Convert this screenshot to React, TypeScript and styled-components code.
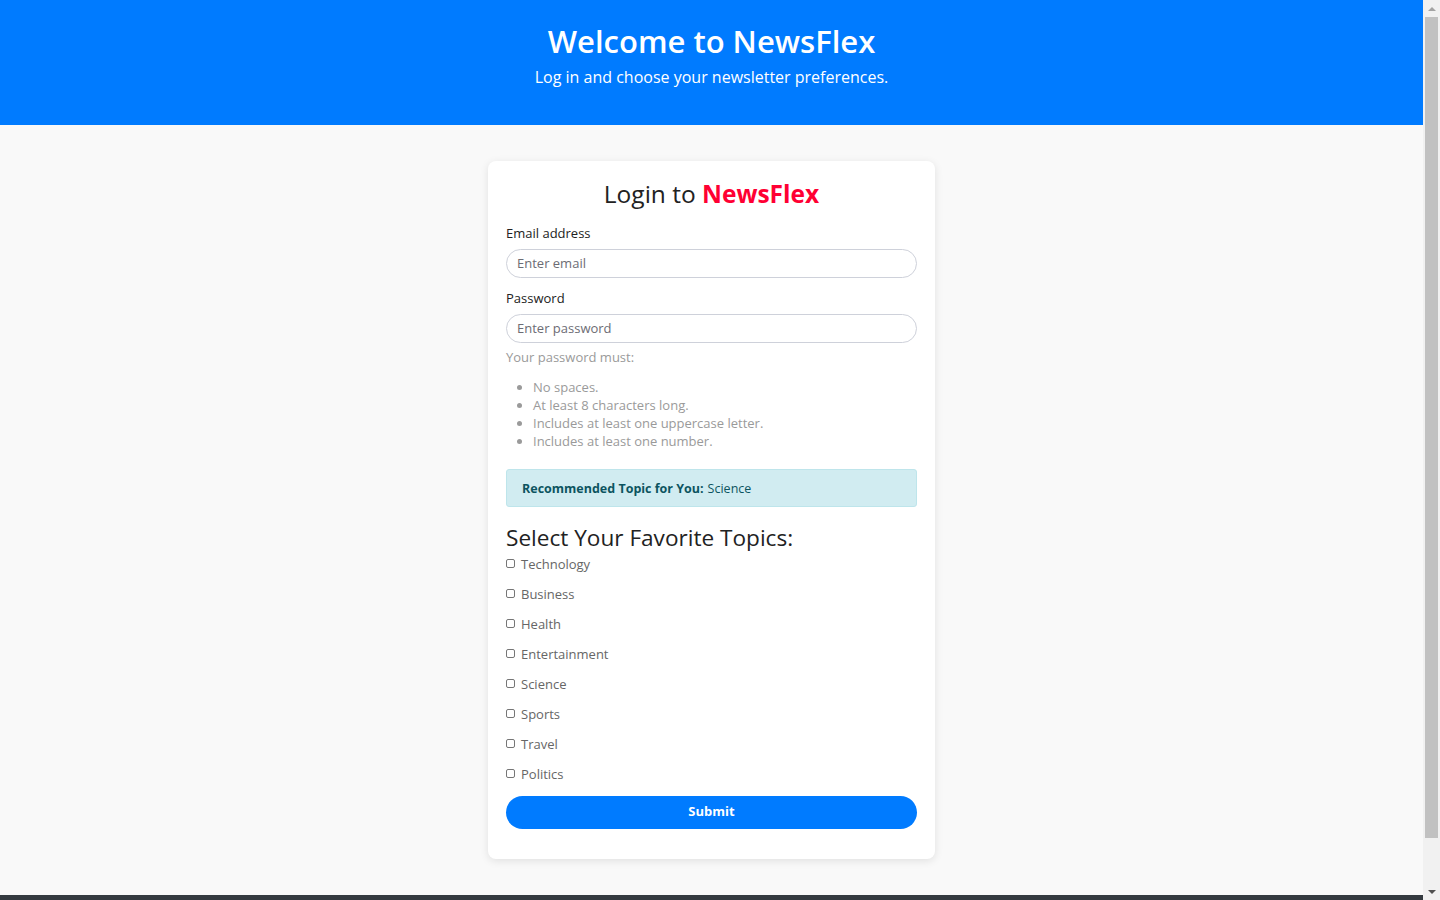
import React from "react";
import styled, { createGlobalStyle } from "styled-components";

const GlobalStyle = createGlobalStyle`
  html, body { margin: 0; padding: 0; }
  body {
    background: #f9f9f9;
    font-family: "Open Sans", "Noto Sans", Arial, sans-serif;
    color: #333;
    padding-right: 17px;
  }
  * { box-sizing: border-box; }
`;

const Scrollbar = styled.div`
  position: fixed;
  top: 0;
  right: 0;
  bottom: 0;
  width: 17px;
  background: #f1f1f1;
  display: flex;
  flex-direction: column;
  z-index: 10;
`;

const ScrollArrow = styled.div`
  height: 17px;
  flex: none;
  display: flex;
  align-items: center;
  justify-content: center;
`;

const ScrollThumb = styled.div`
  flex: none;
  height: 821px;
  margin: 0 2px;
  background: #c1c1c1;
`;

const ScrollSpace = styled.div`
  flex: 1;
`;

const Header = styled.header`
  background: #007bff;
  color: #fff;
  text-align: center;
  padding: 22px 16px 36px;
`;

const HeaderTitle = styled.h1`
  margin: 0;
  font-size: 31px;
  font-weight: 600;
  line-height: 38px;
`;

const HeaderSub = styled.p`
  margin: 5px 0 0;
  font-size: 16px;
  line-height: 24px;
`;

const Main = styled.main`
  padding: 36px 16px 36px;
`;

const Card = styled.div`
  width: 447px;
  margin: 0 auto;
  background: #fff;
  border-radius: 8px;
  box-shadow: 0 2px 8px rgba(0, 0, 0, 0.1);
  padding: 17px 18px 30px;
`;

const CardTitle = styled.h2`
  margin: 0 0 13px;
  text-align: center;
  font-size: 24.5px;
  font-weight: 400;
  line-height: 32px;
  color: #222;
`;

const Brand = styled.span`
  color: #ff0033;
  font-weight: 700;
`;

const Field = styled.div`
  display: flex;
  flex-direction: column;
  gap: 6px;
  & + & { margin-top: 10px; }
`;

const Label = styled.label`
  font-size: 13px;
  line-height: 20px;
  color: #222;
`;

const Input = styled.input`
  width: 100%;
  height: 29px;
  border: 1px solid #ced1da;
  border-radius: 15px;
  padding: 0 10px 2px;
  font: inherit;
  font-size: 13px;
  color: #333;
  background: #fff;
  outline: none;
  &::placeholder { color: #6c6c74; }
`;

const Hint = styled.div`
  margin-top: 4px;
  font-size: 13px;
  line-height: 20px;
  color: #9a9a9a;
`;

const HintList = styled.ul`
  margin: 11px 0 0;
  padding-left: 27px;
  font-size: 13px;
  line-height: 18px;
  color: #9a9a9a;
`;

const Alert = styled.div`
  margin-top: 19px;
  height: 38px;
  display: flex;
  align-items: center;
  padding: 0 15px;
  background: #d1ecf1;
  border: 1px solid #bee5eb;
  border-radius: 3px;
  color: #0c5460;
  font-size: 12.5px;
`;

const AlertStrong = styled.strong`
  font-weight: 700;
  margin-right: 4px;
`;

const SectionTitle = styled.h3`
  margin: 18px 0 3px;
  font-size: 22.6px;
  font-weight: 500;
  line-height: 26px;
  color: #222;
`;

const TopicList = styled.div`
  display: flex;
  flex-direction: column;
  gap: 10px;
`;

const TopicRow = styled.label`
  display: flex;
  align-items: center;
  gap: 6px;
  height: 20px;
  font-size: 13px;
  color: #666;
`;

const Check = styled.input`
  appearance: none;
  margin: 0 0 2px;
  width: 9px;
  height: 9px;
  border: 1px solid #767676;
  border-radius: 2px;
  background: #fff;
  flex: none;
  &:checked { background: #007bff; border-color: #007bff; }
`;

const Submit = styled.button`
  margin-top: 12px;
  width: 100%;
  height: 33px;
  border: none;
  border-radius: 17px;
  background: #007bff;
  color: #fff;
  font: inherit;
  font-size: 13px;
  font-weight: 700;
  padding: 0 0 3px;
  cursor: pointer;
`;

const Footer = styled.footer`
  background: #343a40;
  height: 54px;
`;

const topics = [
  "Technology",
  "Business",
  "Health",
  "Entertainment",
  "Science",
  "Sports",
  "Travel",
  "Politics",
];

export default function App() {
  return (
    <>
      <GlobalStyle />
      <Header>
        <HeaderTitle>Welcome to NewsFlex</HeaderTitle>
        <HeaderSub>Log in and choose your newsletter preferences.</HeaderSub>
      </Header>
      <Main>
        <Card>
          <CardTitle>
            Login to <Brand>NewsFlex</Brand>
          </CardTitle>
          <Field>
            <Label htmlFor="email">Email address</Label>
            <Input id="email" type="email" placeholder="Enter email" />
          </Field>
          <Field>
            <Label htmlFor="password">Password</Label>
            <Input id="password" type="password" placeholder="Enter password" />
          </Field>
          <Hint>Your password must:</Hint>
          <HintList>
            <li>No spaces.</li>
            <li>At least 8 characters long.</li>
            <li>Includes at least one uppercase letter.</li>
            <li>Includes at least one number.</li>
          </HintList>
          <Alert>
            <AlertStrong>Recommended Topic for You:</AlertStrong> Science
          </Alert>
          <SectionTitle>Select Your Favorite Topics:</SectionTitle>
          <TopicList>
            {topics.map((t) => (
              <TopicRow key={t}>
                <Check type="checkbox" />
                {t}
              </TopicRow>
            ))}
          </TopicList>
          <Submit type="button">Submit</Submit>
        </Card>
      </Main>
      <Footer />
      <Scrollbar aria-hidden="true">
        <ScrollArrow>
          <svg width="8" height="4" viewBox="0 0 8 4">
            <path d="M0 4 L4 0 L8 4 Z" fill="#a3a3a3" />
          </svg>
        </ScrollArrow>
        <ScrollThumb />
        <ScrollSpace />
        <ScrollArrow>
          <svg width="8" height="4" viewBox="0 0 8 4">
            <path d="M0 0 L8 0 L4 4 Z" fill="#505050" />
          </svg>
        </ScrollArrow>
      </Scrollbar>
    </>
  );
}
